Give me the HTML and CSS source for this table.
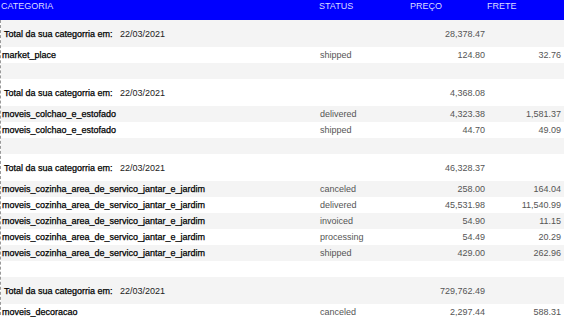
FILE: index.html
```html
<!DOCTYPE html>
<html>
<head>
<meta charset="utf-8">
<link rel="stylesheet" href="styles.css">
</head>
<body>
<div class="table">
  <div class="row head">
    <div class="c cat">CATEGORIA</div>
    <div class="c st">STATUS</div>
    <div class="c hp">PREÇO</div>
    <div class="c hf">FRETE</div>
  </div>
  <div class="body">
    <div class="row total"><div class="c cat"><span class="lbl">Total da sua categorria em:</span><span class="date">22/03/2021</span></div><div class="c st"></div><div class="c num">28,378.47</div><div class="c num fr"></div></div>
    <div class="row"><div class="c cat">market_place</div><div class="c st">shipped</div><div class="c num">124.80</div><div class="c num fr">32.76</div></div>
    <div class="row"><div class="c cat"></div><div class="c st"></div><div class="c num"></div><div class="c num fr"></div></div>

    <div class="row total"><div class="c cat"><span class="lbl">Total da sua categorria em:</span><span class="date">22/03/2021</span></div><div class="c st"></div><div class="c num">4,368.08</div><div class="c num fr"></div></div>
    <div class="row"><div class="c cat">moveis_colchao_e_estofado</div><div class="c st">delivered</div><div class="c num">4,323.38</div><div class="c num fr">1,581.37</div></div>
    <div class="row"><div class="c cat">moveis_colchao_e_estofado</div><div class="c st">shipped</div><div class="c num">44.70</div><div class="c num fr">49.09</div></div>
    <div class="row"><div class="c cat"></div><div class="c st"></div><div class="c num"></div><div class="c num fr"></div></div>

    <div class="row total"><div class="c cat"><span class="lbl">Total da sua categorria em:</span><span class="date">22/03/2021</span></div><div class="c st"></div><div class="c num">46,328.37</div><div class="c num fr"></div></div>
    <div class="row"><div class="c cat">moveis_cozinha_area_de_servico_jantar_e_jardim</div><div class="c st">canceled</div><div class="c num">258.00</div><div class="c num fr">164.04</div></div>
    <div class="row"><div class="c cat">moveis_cozinha_area_de_servico_jantar_e_jardim</div><div class="c st">delivered</div><div class="c num">45,531.98</div><div class="c num fr">11,540.99</div></div>
    <div class="row"><div class="c cat">moveis_cozinha_area_de_servico_jantar_e_jardim</div><div class="c st">invoiced</div><div class="c num">54.90</div><div class="c num fr">11.15</div></div>
    <div class="row"><div class="c cat">moveis_cozinha_area_de_servico_jantar_e_jardim</div><div class="c st">processing</div><div class="c num">54.49</div><div class="c num fr">20.29</div></div>
    <div class="row"><div class="c cat">moveis_cozinha_area_de_servico_jantar_e_jardim</div><div class="c st">shipped</div><div class="c num">429.00</div><div class="c num fr">262.96</div></div>
    <div class="row"><div class="c cat"></div><div class="c st"></div><div class="c num"></div><div class="c num fr"></div></div>

    <div class="row total"><div class="c cat"><span class="lbl">Total da sua categorria em:</span><span class="date">22/03/2021</span></div><div class="c st"></div><div class="c num">729,762.49</div><div class="c num fr"></div></div>
    <div class="row"><div class="c cat">moveis_decoracao</div><div class="c st">canceled</div><div class="c num">2,297.44</div><div class="c num fr">588.31</div></div>
  </div>
</div>
</body>
</html>
```
FILE: styles.css
```css
html, body {
  margin: 0;
  padding: 0;
  background: #fff;
}
body {
  font-family: "Liberation Sans", Arial, sans-serif;
  font-size: 9px;
  color: #555;
  overflow: hidden;
}
.table {
  width: 564px;
}
.row {
  display: grid;
  grid-template-columns: 318px 92px 77px 77px;
  height: 16px;
  align-items: center;
}
.body {
  border-left: 1px dashed #9a9a9a;
}
.body .row:nth-child(odd) {
  background: #f4f4f4;
}
.body .row:nth-child(even) {
  background: #fff;
}
.row.total {
  height: 27px;
}
.head {
  background: #0000ff;
  height: 20px;
  align-items: start;
  color: #dcdcff;
}
.head .c {
  padding-top: 1px;
}
.c {
  white-space: nowrap;
  overflow: hidden;
}
.cat {
  padding-left: 1px;
  color: #000;
  -webkit-text-stroke: 0.25px #000;
}
.head .cat {
  color: #dcdcff;
  -webkit-text-stroke: 0;
}
.st {
  padding-left: 1px;
}
.num {
  text-align: right;
  padding-right: 3px;
}
.num.fr {
  padding-right: 4px;
}
.total .cat {
  padding-left: 3px;
}
.lbl {
  display: inline-block;
  width: 116px;
}
.date {
  color: #222;
  -webkit-text-stroke: 0;
}
```
